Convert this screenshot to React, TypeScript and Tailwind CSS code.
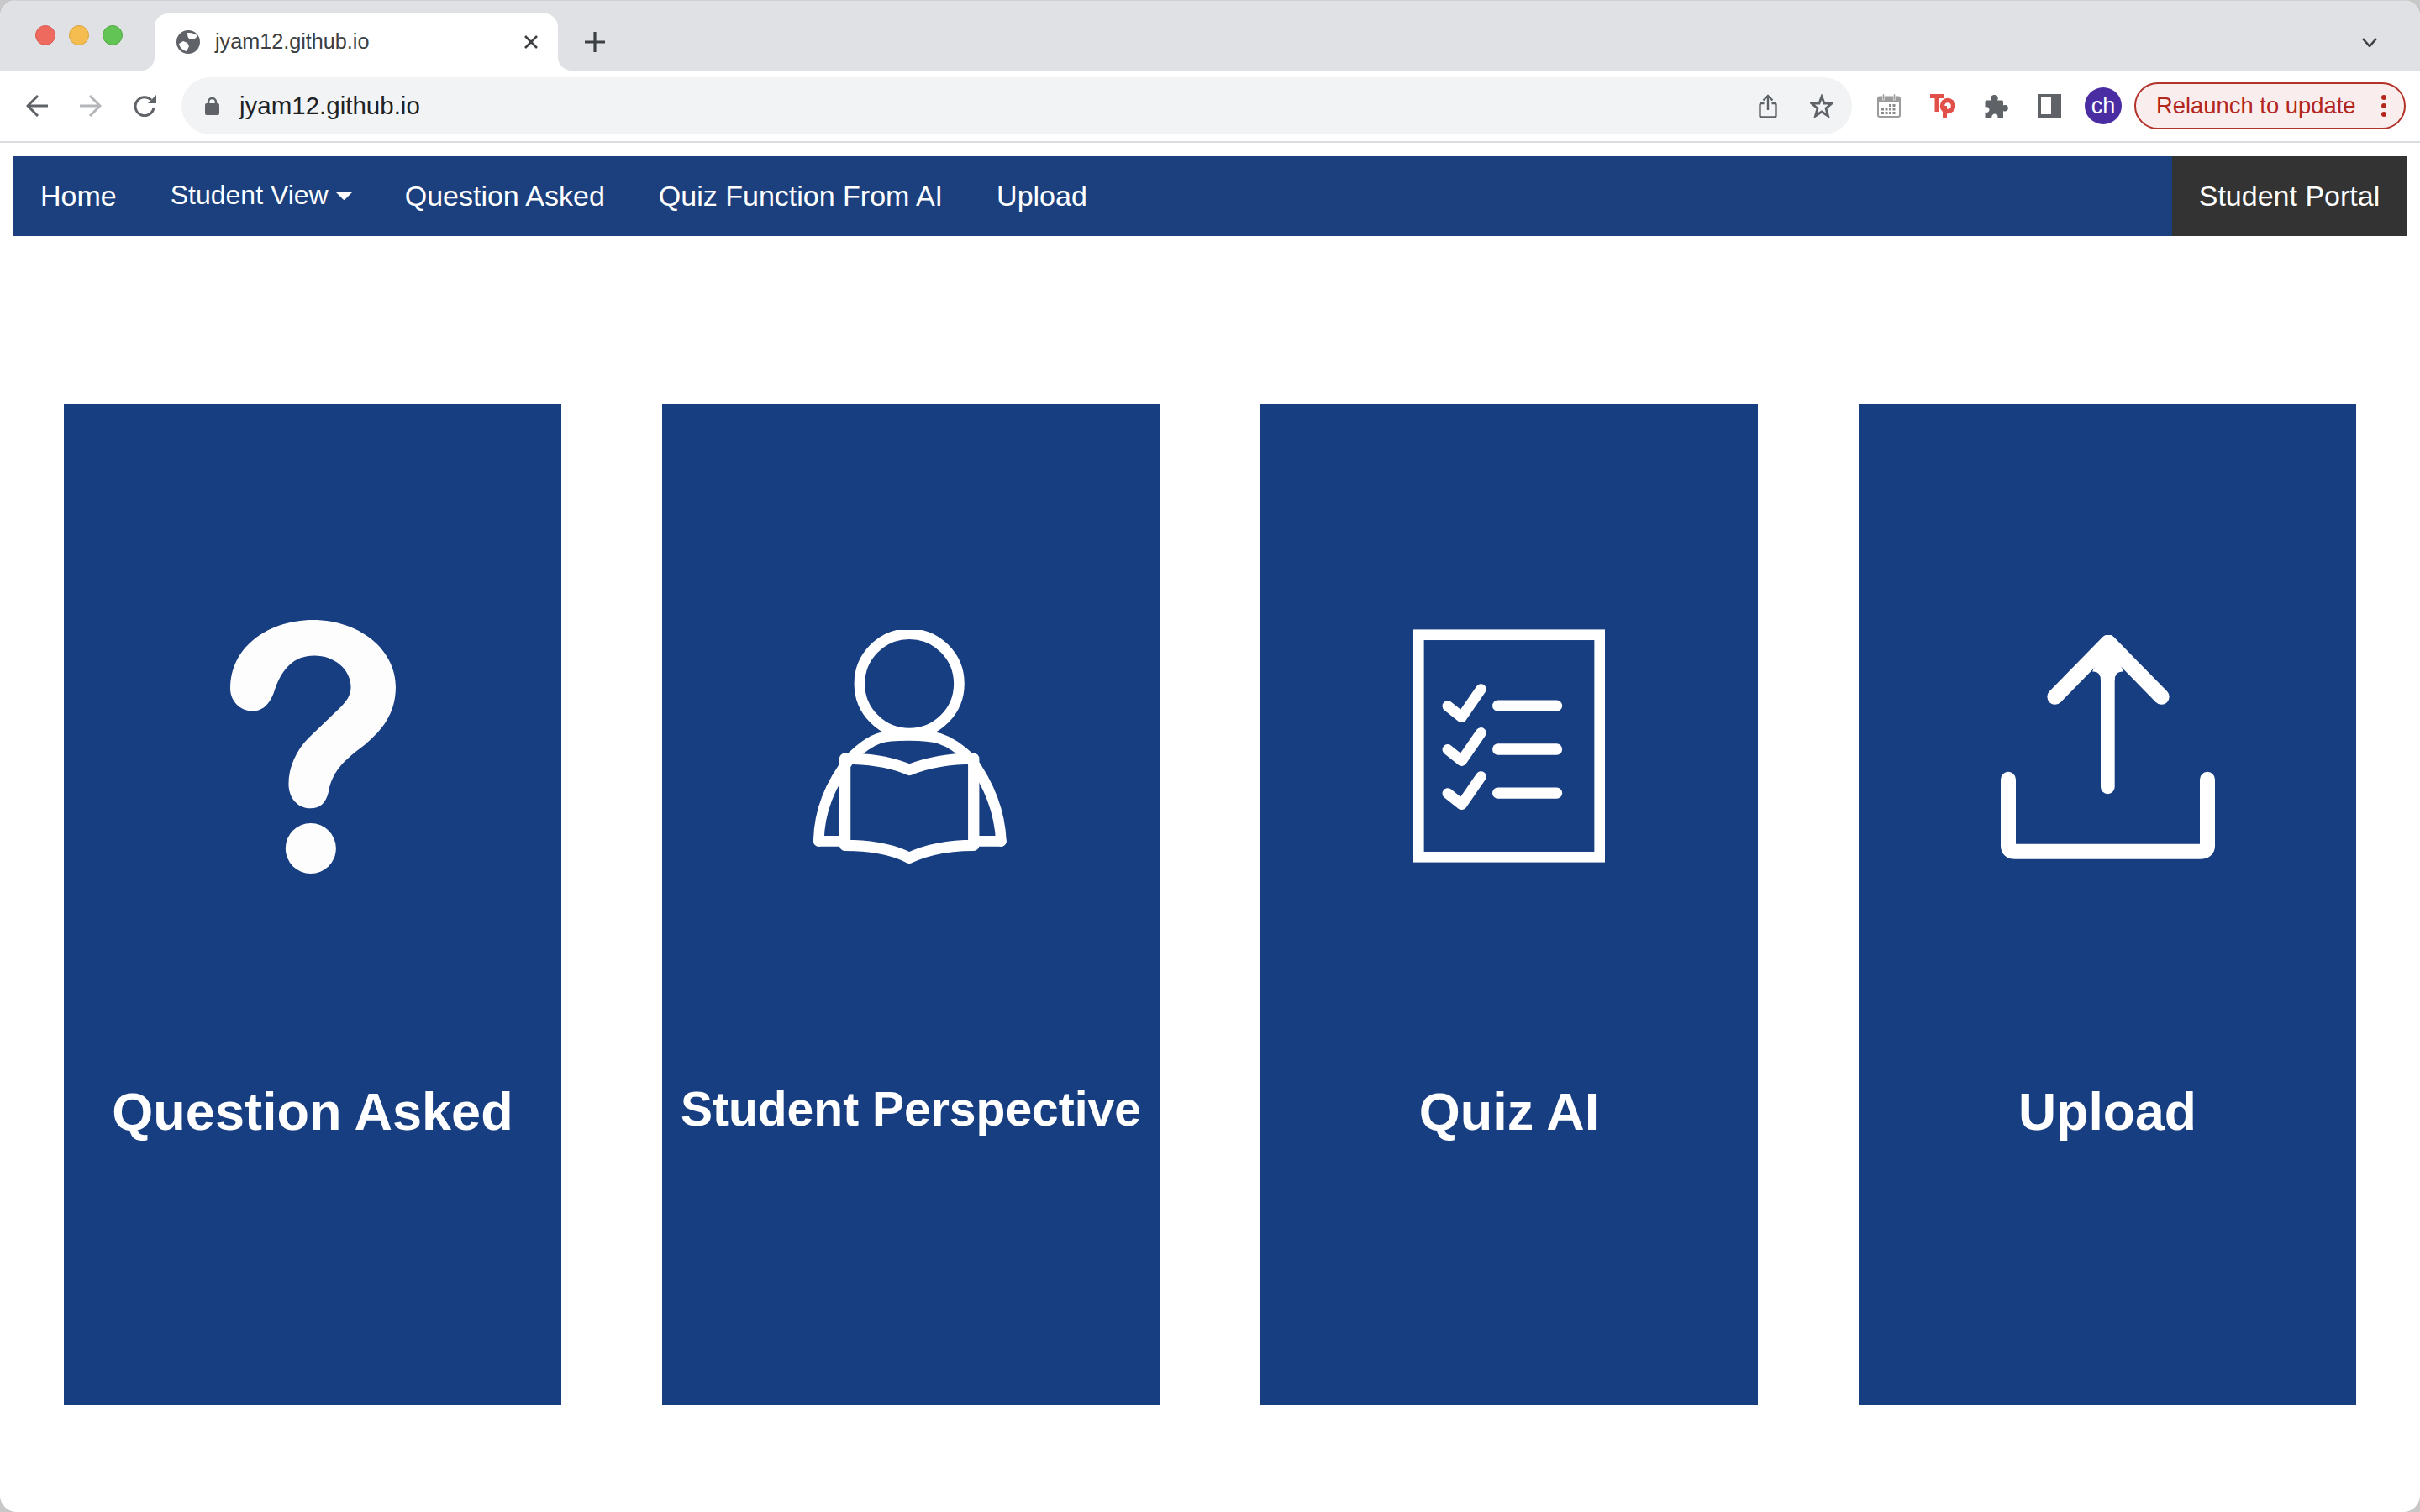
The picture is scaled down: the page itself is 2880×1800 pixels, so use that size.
import React from "react";

const font = { fontFamily: '"Liberation Sans", Arial, sans-serif' };

function Flare({ side }: { side: "l" | "r" }) {
  return (
    <svg
      viewBox="0 0 16 16"
      className={side === "l" ? "absolute bottom-0 left-[-16px] w-4 h-4" : "absolute bottom-0 right-[-16px] w-4 h-4"}
    >
      <path d={side === "l" ? "M16 0A16 16 0 0 1 0 16H16Z" : "M0 0A16 16 0 0 0 16 16H0Z"} fill="#ffffff" />
    </svg>
  );
}

function Globe() {
  return (
    <svg viewBox="0 0 28 28" className="w-[28px] h-[28px] shrink-0">
      <circle cx="14" cy="14" r="14" fill="#5f6368" />
      <path d="M13 3C17 2.500 22 3.500 25 7L21 11H16L13.500 8Z" fill="#ffffff" />
      <path d="M3 16L8 13L13 15L15 19L12 25C8 24 4 21 3 16Z" fill="#ffffff" />
    </svg>
  );
}

function NavArrow({ d, tone, extra }: { d: string; tone: string; extra?: string }) {
  return (
    <svg viewBox="0 0 26 26" className={"w-[26px] h-[26px] shrink-0 " + (extra ?? "")}>
      <path d={d} fill="none" stroke={tone} strokeWidth="3" />
    </svg>
  );
}

function Reload() {
  return (
    <svg viewBox="0 0 27 26" className="w-[27px] h-[26px] ml-[38px] shrink-0">
      <path d="M21 6A11 11 0 1 0 24 15" fill="none" stroke="#5f6368" strokeWidth="3" />
      <path d="M27 0V10H17Z" fill="#5f6368" />
    </svg>
  );
}

function Lock() {
  return (
    <svg viewBox="0 0 17 21" className="w-[17px] h-[21px] ml-[28px] shrink-0">
      <path d="M4 9V5.500A4.500 4.500 0 0 1 13 5.500V9" fill="none" stroke="#5f6368" strokeWidth="2.500" />
      <rect x="0" y="7" width="17" height="14" rx="2" fill="#5f6368" />
    </svg>
  );
}

function Share() {
  return (
    <svg viewBox="0 0 22 29" className="w-[22px] h-[29px] shrink-0">
      <path d="M6.500 11H3.500A2 2 0 0 0 1.500 13V25.500A2 2 0 0 0 3.500 27.500H18.500A2 2 0 0 0 20.500 25.500V13A2 2 0 0 0 18.500 11H15.500" fill="none" stroke="#5f6368" strokeWidth="2.400" />
      <path d="M11 19V2M5.500 7.500L11 2L16.500 7.500" fill="none" stroke="#5f6368" strokeWidth="2.400" />
    </svg>
  );
}

function Star() {
  return (
    <svg viewBox="0 0 28 28" className="w-[28px] h-[28px] ml-[39px] shrink-0">
      <path d="M14 3L17 11H26L19 17L21.500 26L14 21L6.500 26L9 17L2 11H11Z" fill="none" stroke="#5f6368" strokeWidth="2.800" strokeLinejoin="miter" />
    </svg>
  );
}

function Calendar() {
  return (
    <svg viewBox="0 0 28 28" className="w-[28px] h-[28px] shrink-0">
      <rect x="1" y="3.500" width="26" height="23.500" rx="2" fill="none" stroke="#9c9c9c" strokeWidth="2" />
      <rect x="1" y="3.500" width="26" height="5.500" fill="#9c9c9c" />
      <rect x="6.500" y="0" width="2" height="7" fill="#9c9c9c" stroke="#ffffff" strokeWidth="0.500" />
      <rect x="19.500" y="0" width="2" height="7" fill="#9c9c9c" stroke="#ffffff" strokeWidth="0.500" />
      <path d="M14 12h3v3h-3zM18.500 12h3v3h-3zM5 16.500h3v3h-3zM9.500 16.500h3v3h-3zM14 16.500h3v3h-3zM18.500 16.500h3v3h-3zM5 21h3v3h-3zM9.500 21h3v3h-3zM14 21h3v3h-3zM18.500 21h3v3h-3z" fill="#8a8a8a" />
    </svg>
  );
}

function TpLogo() {
  return (
    <svg viewBox="0 0 30 28" className="w-[30px] h-[28px] ml-[35px] shrink-0">
      <path d="M0 0H16V5H11V21H5.500V5H0Z" fill="#e2504a" />
      <circle cx="21" cy="14" r="6.500" fill="none" stroke="#e2504a" strokeWidth="5.500" />
      <path d="M15 14H20V27A1 1 0 0 1 15 27Z" fill="#e2504a" />
    </svg>
  );
}

function Puzzle() {
  return (
    <svg viewBox="0 0 29 29" className="w-[29px] h-[29px] ml-[34px] shrink-0">
      <path
        d="M3 7.500H9C8 6 8 4 9 2.500C10.500 .5 14.500 .5 16 2.500C17 4 17 6 16 7.500H21.500A1.500 1.500 0 0 1 23 9V13.500C25 12.500 27.500 13 28.500 15C29.500 17 28.500 20 25.500 20.500C24.500 20.700 23.500 20.500 23 20V27.500A1.500 1.500 0 0 1 21.500 29H16C17 27 16.500 24 14 23.500C10.500 23 8.500 26 9.500 29H3A1.500 1.500 0 0 1 1.500 27.500V21.500C3.500 22.500 6.500 21.500 6.500 18.500C6.500 15.500 3.500 14.500 1.500 15.500V9A1.500 1.500 0 0 1 3 7.500Z"
        fill="#5f6368"
      />
    </svg>
  );
}

function QuestionIcon() {
  return (
    <svg viewBox="160 115 590 905" className="w-[197px] h-[302px]">
      <path
        d="M160 360C160 200 310 115 455 115C620 115 750 220 750 355C750 450 700 510 640 560C590 600 525 640 510 730C500 770 480 787 445 787C400 787 368 750 368 700C368 640 395 580 440 535L550 430C575 405 590 385 590 355C590 290 530 242 460 242C385 242 345 290 320 360C305 410 280 440 240 440C195 440 160 405 160 360Z"
        fill="#fdfdfe"
      />
      <circle cx="447" cy="930" r="90" fill="#fdfdfe" />
    </svg>
  );
}

function ReaderIcon() {
  return (
    <svg viewBox="85 90 695 835" className="w-[232px] h-[278px]" fill="none" stroke="#ffffff" strokeWidth="38" strokeLinejoin="round" strokeLinecap="round">
      <circle cx="427" cy="282" r="178" />
      <path d="M103 845C105 720 160 620 215 550C300 465 340 467 427 467C510 467 560 470 645 550C700 625 750 720 755 845" />
      <path d="M103 845H197M657 845H755" />
      <path d="M197 550V860C290 860 370 875 427 905C490 875 570 860 657 860V550C570 550 490 565 427 590C370 565 290 550 197 550Z" strokeWidth="40" />
    </svg>
  );
}

function QuizIcon() {
  return (
    <svg viewBox="65 88 686 834" className="w-[228px] h-[278px]" fill="none" stroke="#ffffff" strokeLinecap="round">
      <rect x="84" y="107" width="648" height="796" strokeWidth="38" />
      {[0, 156, 313].map((o) => (
        <g key={o} transform={`translate(0 ${o})`}>
          <path d="M188 362L238 402L307 302" strokeWidth="38" strokeLinejoin="round" />
          <path d="M368 361H578" strokeWidth="40" />
        </g>
      ))}
    </svg>
  );
}

function UploadIcon() {
  return (
    <svg viewBox="93 78 765 800" className="w-[255px] h-[267px]" fill="none" stroke="#ffffff" strokeLinecap="round" strokeLinejoin="round">
      <path d="M477 100L420 208Q450 205 450 240H500Q500 205 532 208Z" fill="#ffffff" stroke="none" />
      <path d="M475 200V620" strokeWidth="50" />
      <path d="M287 298L477 104L667 298" strokeWidth="56" />
      <path d="M120 593V830Q120 851 145 851H805Q831 851 831 830V593" strokeWidth="54" />
    </svg>
  );
}

const cards = [
  { title: "Question Asked", icon: <QuestionIcon />, pad: "pt-[257px]", text: "text-[63px] pt-px" },
  { title: "Student Perspective", icon: <ReaderIcon />, pad: "pt-[269px]", text: "text-[57px] -mt-[2px]" },
  { title: "Quiz AI", icon: <QuizIcon />, pad: "pt-[268px]", text: "text-[63px] pt-px" },
  { title: "Upload", icon: <UploadIcon />, pad: "pt-[275px]", text: "text-[62.500px] pt-px" },
];

const navItems = ["Question Asked", "Quiz Function From AI", "Upload"];

export default function App() {
  return (
    <div className="w-[2880px] h-[1800px] bg-[#c8c8c8] overflow-hidden" style={font}>
      <div className="h-full bg-white rounded-[20px] overflow-hidden">
        {/* tab strip */}
        <div className="h-[84px] bg-[#dfe1e5] flex items-center pl-[42px] pr-[51px] shadow-[inset_0_1px_0_#cfd0d3]">
          <div className="flex gap-[16px]">
            <span className="w-[24px] h-[24px] rounded-full bg-[#ee6a5f] border border-[#d9574c]" />
            <span className="w-[24px] h-[24px] rounded-full bg-[#f5bd4f] border border-[#d9a33f]" />
            <span className="w-[24px] h-[24px] rounded-full bg-[#61c454] border border-[#52a944]" />
          </div>
          <div className="relative ml-[38px] w-[480px] h-[68px] self-end bg-white rounded-t-[16px] flex items-center pl-[26px]">
            <Flare side="l" />
            <Flare side="r" />
            <Globe />
            <span className="ml-[18px] text-[25.200px] text-[#3c4043] leading-none">jyam12.github.io</span>
            <svg viewBox="0 0 16 16" className="absolute left-[440px] top-[26px] w-4 h-4">
              <path d="M1 1L15 15M15 1L1 15" stroke="#3c4043" strokeWidth="2.600" />
            </svg>
          </div>
          <svg viewBox="0 0 24 24" className="ml-[32px] mt-[16px] w-[24px] h-[24px]">
            <path d="M12 0V24M0 12H24" stroke="#3c4043" strokeWidth="3.200" strokeLinecap="round" />
          </svg>
          <svg viewBox="0 0 18 11" className="ml-auto mt-[17px] w-[18px] h-[11px]">
            <path d="M1 1L9 10L17 1" fill="none" stroke="#3c4043" strokeWidth="2.600" />
          </svg>
        </div>

        {/* toolbar */}
        <div className="h-[86px] border-b-2 border-[#dadce0] flex items-center pl-[31px] text-[#202124]">
          <NavArrow d="M26 13H3M14 1L2 13L14 25" tone="#5f6368" />
          <NavArrow d="M0 13H23M12 1L24 13L12 25" tone="#b4b6b9" extra="ml-[38px]" />
          <Reload />
          <div className="ml-[30px] w-[1988px] h-[68px] rounded-full bg-[#f1f3f4] flex items-center">
            <Lock />
            <span className="ml-[24px] text-[29.500px] leading-none">jyam12.github.io</span>
            <div className="ml-auto mr-[22px] flex items-center">
              <Share />
              <Star />
            </div>
          </div>
          <div className="ml-[30px] flex items-center">
            <Calendar />
            <TpLogo />
            <Puzzle />
            <div className="ml-[35px] w-[28px] h-[28px] bg-[#5f6368] pl-[4px] py-[4px]">
              <div className="w-[12px] h-full bg-white" />
            </div>
            <div className="ml-[28px] w-[44px] h-[44px] rounded-full bg-[#4a2da3] text-white text-[27px] flex items-center justify-center leading-none">ch</div>
            <div className="ml-[15px] w-[323px] h-[56px] rounded-full border-2 border-[#b3322a] bg-[#f9eded] flex items-center pl-[24px] text-[#b3261e] text-[27.400px] leading-none">
              <span>Relaunch to update</span>
              <span className="ml-[30px] flex flex-col gap-[4px]">
                <span className="w-[6px] h-[6px] rounded-full bg-[#b3261e]" />
                <span className="w-[6px] h-[6px] rounded-full bg-[#b3261e]" />
                <span className="w-[6px] h-[6px] rounded-full bg-[#b3261e]" />
              </span>
            </div>
          </div>
        </div>

        {/* site nav */}
        <nav className="mt-[16px] mx-[16px] h-[95px] bg-[#1c3f7e] text-white text-[34px] flex">
          <a className="px-[32px] flex items-center">Home</a>
          <a className="pl-[32px] pr-[31px] flex items-center pb-[3px] text-[32px]">
            Student View
            <svg viewBox="0 0 19 10" className="ml-[9px] w-[19px] h-[10px] mt-[2px]">
              <path d="M1 0H18A1 1 0 0 1 18.500 1.500L10.500 9.500A1.500 1.500 0 0 1 8.500 9.500L.5 1.500A1 1 0 0 1 1 0Z" fill="#ffffff" />
            </svg>
          </a>
          {navItems.map((t) => (
            <a key={t} className="px-[32px] flex items-center">{t}</a>
          ))}
          <a className="ml-auto w-[279px] bg-[#333333] flex items-center justify-center">Student Portal</a>
        </nav>

        {/* cards */}
        <main className="mt-[200px] pl-[76px] flex gap-[120px]">
          {cards.map((c) => (
            <section key={c.title} className="w-[592px] h-[1192px] bg-[#183e82] text-white flex flex-col items-center">
              <div className={"h-[804px] " + c.pad}>{c.icon}</div>
              <h2 className={"font-bold leading-[74px] whitespace-nowrap " + c.text}>{c.title}</h2>
            </section>
          ))}
        </main>
      </div>
    </div>
  );
}
